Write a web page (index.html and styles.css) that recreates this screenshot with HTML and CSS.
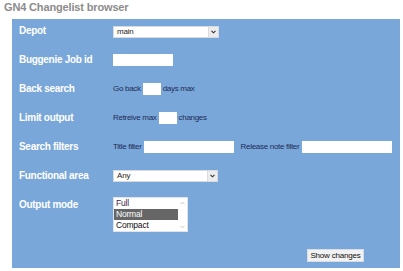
FILE: index.html
```html
<!DOCTYPE html>
<html>
<head>
<meta charset="utf-8">
<title>GN4 Changelist browser</title>
<link rel="stylesheet" href="styles.css">
</head>
<body>
<h1 class="title">GN4 Changelist browser</h1>
<form class="panel">
  <div class="row">
    <div class="label">Depot</div>
    <div class="field">
      <div class="select">
        <span class="select-value">main</span>
        <span class="select-arrow"><svg width="5" height="4" viewBox="0 0 5 4"><path d="M0.5 0.8 L2.5 2.8 L4.5 0.8" fill="none" stroke="#333" stroke-width="1.1"/></svg></span>
      </div>
    </div>
  </div>
  <div class="row">
    <div class="label">Buggenie Job id</div>
    <div class="field"><input class="box box-job" type="text"></div>
  </div>
  <div class="row">
    <div class="label">Back search</div>
    <div class="field"><span class="txt">Go back</span><input class="box box-small" type="text"><span class="txt">days max</span></div>
  </div>
  <div class="row">
    <div class="label">Limit output</div>
    <div class="field"><span class="txt">Retreive max</span><input class="box box-small" type="text"><span class="txt">changes</span></div>
  </div>
  <div class="row">
    <div class="label">Search filters</div>
    <div class="field"><span class="txt">Title filter</span><input class="box box-filter" type="text"><span class="txt txt-sep">Release note filter</span><input class="box box-filter" type="text"></div>
  </div>
  <div class="row">
    <div class="label">Functional area</div>
    <div class="field">
      <div class="select select-area">
        <span class="select-value">Any</span>
        <span class="select-arrow"><svg width="5" height="4" viewBox="0 0 5 4"><path d="M0.5 0.8 L2.5 2.8 L4.5 0.8" fill="none" stroke="#333" stroke-width="1.1"/></svg></span>
      </div>
    </div>
  </div>
  <div class="row row-last">
    <div class="label">Output mode</div>
    <div class="field field-top">
      <div class="listbox">
        <div class="options">
          <div class="option option-first">Full</div>
          <div class="option option-selected">Normal</div>
          <div class="option">Compact</div>
        </div>
        <div class="scroll">
          <svg width="5" height="4" viewBox="0 0 5 4"><path d="M0.5 3.2 L2.5 1.2 L4.5 3.2" fill="none" stroke="#c4c4c4" stroke-width="1"/></svg>
          <svg width="5" height="4" viewBox="0 0 5 4"><path d="M0.5 0.8 L2.5 2.8 L4.5 0.8" fill="none" stroke="#c4c4c4" stroke-width="1"/></svg>
        </div>
      </div>
    </div>
  </div>
  <div class="actions">
    <button class="btn" type="button">Show changes</button>
  </div>
</form>
</body>
</html>
```
FILE: styles.css
```css
html, body {
  margin: 0;
  padding: 0;
  background: #ffffff;
}

body {
  font-family: "Liberation Sans", Arial, sans-serif;
}

.title {
  margin: 1px 0 5px 4px;
  font-size: 11px;
  line-height: 13px;
  font-weight: bold;
  letter-spacing: -0.15px;
  color: #8c8c8c;
}

.panel {
  margin: 0 3px 0 12px;
  width: 388px;
  box-sizing: border-box;
  padding: 6px 7px 6px 7px;
  background: #7aa7d9;
  display: flex;
  flex-direction: column;
}

.row {
  display: flex;
  align-items: flex-start;
  height: 29px;
}

.row-last {
  height: auto;
}

.label {
  width: 94px;
  flex: none;
  font-size: 10px;
  line-height: 12px;
  font-weight: bold;
  letter-spacing: -0.3px;
  color: #ffffff;
}

.field {
  display: flex;
  align-items: center;
  gap: 2px;
  height: 12px;
}

.field-top {
  height: auto;
  margin-top: -2px;
}

.txt {
  font-size: 8px;
  line-height: 12px;
  letter-spacing: -0.3px;
  color: #1d2b57;
  white-space: nowrap;
}

.txt-sep {
  margin-left: 5px;
  margin-right: 1px;
}

.box {
  display: block;
  box-sizing: border-box;
  height: 12px;
  margin: 0;
  padding: 0 2px;
  border: 0;
  background: #ffffff;
  font: 8px "Liberation Sans", Arial, sans-serif;
}

.box-job { width: 60px; }
.box-small { width: 18px; }
.box-filter { width: 90px; }

.select {
  box-sizing: border-box;
  width: 106px;
  height: 12px;
  margin-top: 2px;
  background: #ffffff;
  border: 1px solid #d6dbe2;
  display: flex;
  align-items: center;
  justify-content: space-between;
}

.select-area {
  width: 105px;
  margin-top: 0;
}

.select-value {
  padding-left: 3px;
  font-size: 8px;
  line-height: 10px;
  letter-spacing: -0.2px;
  color: #2a2420;
}

.select-arrow {
  width: 9px;
  height: 10px;
  background: #ececec;
  border-left: 1px solid #dcdcdc;
  display: flex;
  align-items: center;
  justify-content: center;
}

.select-arrow svg,
.scroll svg {
  display: block;
}

.listbox {
  box-sizing: border-box;
  width: 75px;
  height: 35px;
  background: #ffffff;
  border: 1px solid #dfe4ea;
  display: flex;
}

.options {
  flex: 1;
  padding-top: 0;
}

.option {
  font-size: 8.5px;
  line-height: 11px;
  height: 11px;
  padding-left: 2px;
  letter-spacing: -0.2px;
  color: #111111;
}

.option-first {
  color: #3c2350;
}

.option-selected {
  background: #666666;
  color: #ffffff;
}

.scroll {
  width: 9px;
  display: flex;
  flex-direction: column;
  justify-content: space-between;
  align-items: center;
  padding: 3px 0 2px;
}

.actions {
  display: flex;
  justify-content: flex-end;
  padding-right: 29px;
  margin-top: 17px;
}

.btn {
  box-sizing: border-box;
  height: 13px;
  width: 57px;
  margin: 0;
  padding: 0;
  background: #f2f2f2;
  border: 1px solid #d8dde4;
  font: 8px "Liberation Sans", Arial, sans-serif;
  letter-spacing: -0.2px;
  line-height: 11px;
  color: #111111;
}
```
